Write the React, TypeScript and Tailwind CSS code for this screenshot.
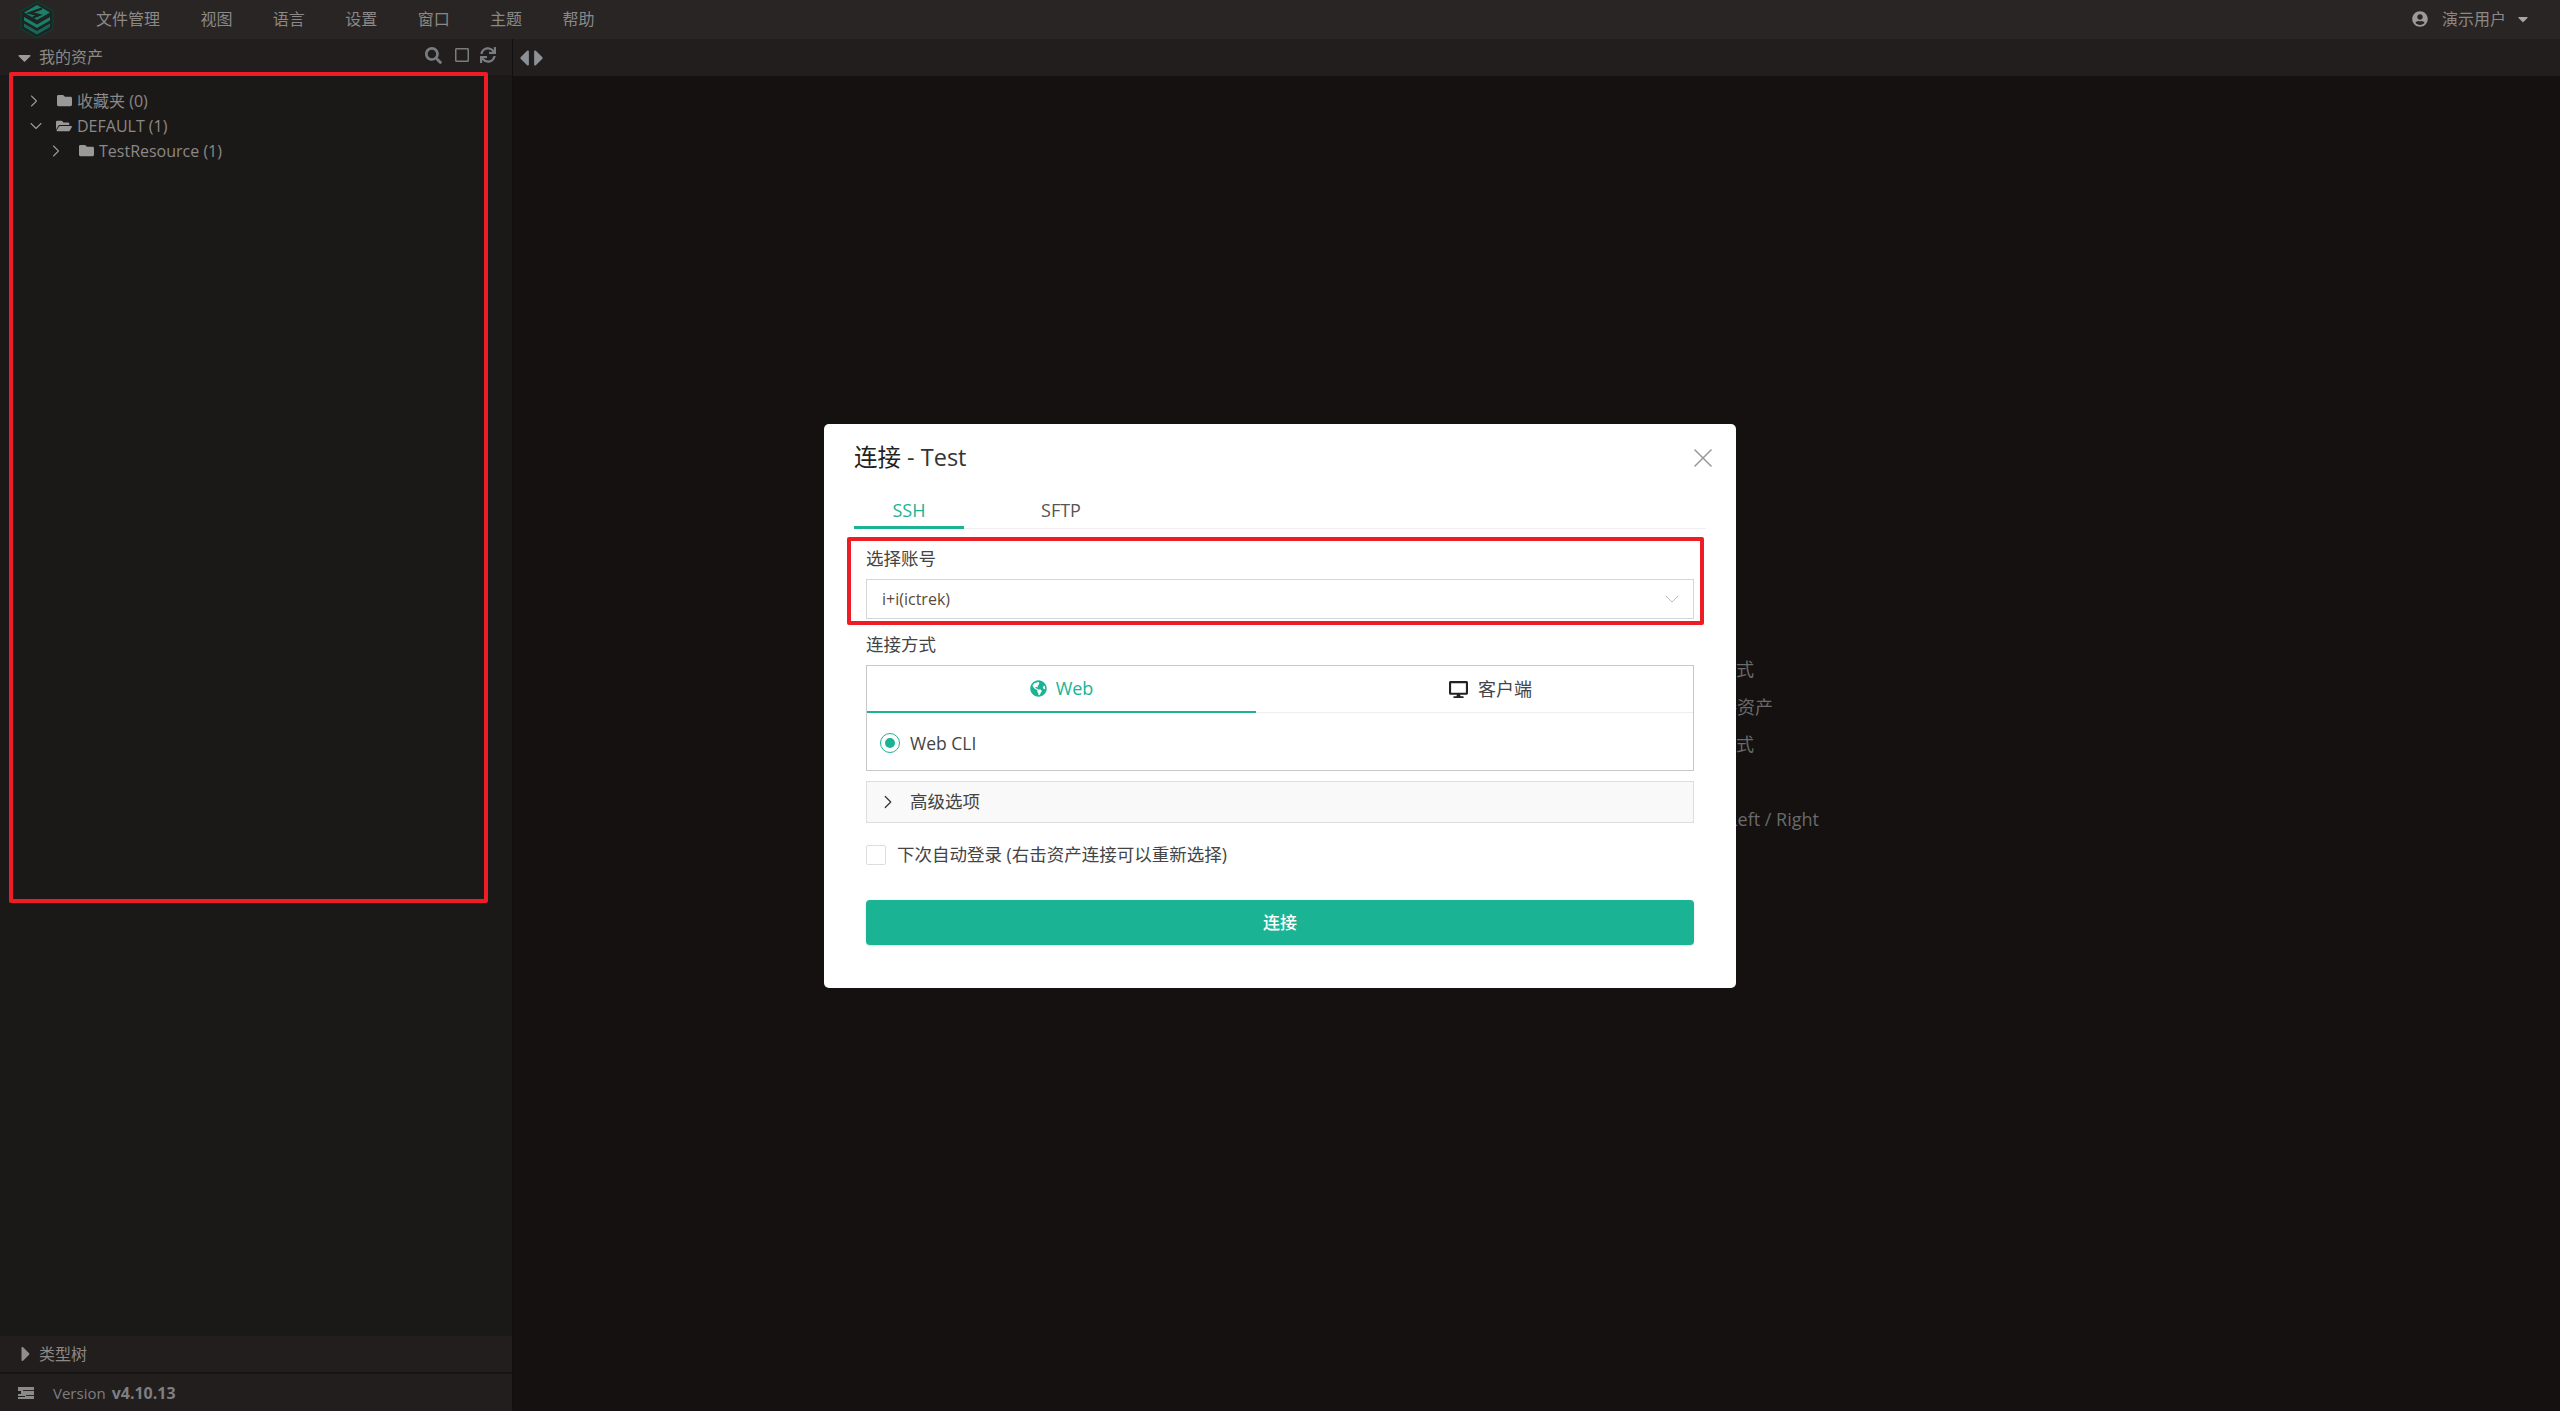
import { ChevronDown, ChevronRight, X } from "lucide-react";
import {
  FaCaretDown,
  FaCaretLeft,
  FaCaretRight,
  FaDesktop,
  FaFolder,
  FaFolderOpen,
  FaGlobeAmericas,
  FaRegSquare,
  FaSearch,
  FaSync,
  FaUserCircle,
} from "react-icons/fa";

const menus = ["文件管理", "视图", "语言", "设置", "窗口", "主题", "帮助"];

const tree = [
  { label: "收藏夹 (0)", open: false, indent: "pl-[27px]" },
  { label: "DEFAULT (1)", open: true, indent: "pl-[27px]" },
  { label: "TestResource (1)", open: false, indent: "pl-[49px]" },
];

function Logo() {
  return (
    <svg width="34" height="38" viewBox="0 0 34 38" className="shrink-0">
      <path d="M17 1 33 10V28L17 37 1 28V10Z" fill="#1d2422" stroke="#123a31" strokeWidth="1.5" />
      <path d="M17 4 30 11.5 17 19 4 11.5Z" fill="#1b8069" />
      <path d="M4 16 17 23.5 30 16V19.5L17 27 4 19.5Z" fill="#1b8069" />
      <path d="M4 22.5 17 30 30 22.5V26L17 33.5 4 26Z" fill="#16685a" />
      <path d="M22 7.5 10 12 19 14 13 16.5" fill="none" stroke="#1d2422" strokeWidth="2.4" />
    </svg>
  );
}

function TopBar() {
  return (
    <header className="flex h-[39px] shrink-0 items-center bg-[#292524] pl-[20px] pr-[29px] text-[16px] text-[#8b8886]">
      <Logo />
      <nav className="ml-[42px] flex gap-[40.4px] pb-[2px]">
        {menus.map((menu) => (
          <span key={menu}>{menu}</span>
        ))}
      </nav>
      <div className="ml-auto flex items-center pb-[1px]">
        <FaUserCircle className="text-[16px] text-[#9a9a9a]" />
        <span className="ml-[14px]">演示用户</span>
        <FaCaretDown className="ml-[9px] text-[16px] text-[#a5a5a5]" />
      </div>
    </header>
  );
}

function Sidebar() {
  return (
    <aside className="flex w-[513px] shrink-0 flex-col border-r border-r-[#111010] bg-[#1b1918] text-[#8b8886]">
      <div className="flex h-[36px] shrink-0 items-center bg-[#211e1d] pl-[14px] pr-[16px] text-[16px]">
        <FaCaretDown className="text-[21px] text-[#9a9a9a]" />
        <span className="ml-[4px]">我的资产</span>
        <div className="ml-auto flex -translate-y-[2px] items-center text-[#7a7d80]">
          <FaSearch className="text-[17px]" />
          <FaRegSquare className="ml-[12px] text-[16px]" />
          <FaSync className="ml-[10px] text-[16px]" />
        </div>
      </div>

      <div className="flex-1 pt-[13px] text-[16px]">
        {tree.map((row) => (
          <div key={row.label} className={`flex h-[25px] items-center ${row.indent}`}>
            <span className="mr-[15px] flex w-[14px] shrink-0 justify-center">
              {row.open ? (
                <ChevronDown size={20} strokeWidth={1.3} className="shrink-0 translate-x-[2px] text-[#999]" />
              ) : (
                <ChevronRight size={20} strokeWidth={1.3} className="shrink-0 text-[#999]" />
              )}
            </span>
            <span className="mr-[5px] flex w-[16px] justify-center text-[#999]">
              {row.open ? <FaFolderOpen className="text-[16px]" /> : <FaFolder className="text-[15px]" />}
            </span>
            <span>{row.label}</span>
          </div>
        ))}
      </div>

      <div className="flex h-[36px] shrink-0 items-center bg-[#211e1d] pl-[14px] text-[16px]">
        <FaCaretRight className="text-[24px] text-[#8f8f8f]" />
        <span className="ml-[1px]">类型树</span>
      </div>
      <div className="h-[2px] shrink-0 bg-[#171514]" />
      <div className="flex h-[37px] shrink-0 items-center bg-[#211e1d] pl-[18px] pt-[1px] text-[15px] text-[#7d7f82]">
        <svg width="16" height="12" viewBox="0 0 16 12" className="shrink-0">
          <path d="M0 0H16V12H0V10H7V9H0V7H3V4H0Z" fill="#8a8a8a" />
          <path d="M5 3H16V4H5ZM8 8H16V9H8Z" fill="#2a2725" />
        </svg>
        <span className="ml-[19px]">Version</span>
        <span className="ml-[6px] text-[16px] font-bold">v4.10.13</span>
      </div>
    </aside>
  );
}

function Main() {
  return (
    <main className="flex min-w-0 flex-1 flex-col bg-[#141110]">
      <div className="flex h-[37px] shrink-0 items-center bg-[#211e1d] text-[#8d9195]">
        <FaCaretLeft className="-ml-[2px] text-[26px]" />
        <FaCaretRight className="-ml-[11px] text-[26px]" />
      </div>
      {/* help text, mostly hidden behind the dialog */}
      <div className="flex flex-col items-end pr-[806px] pt-[575px] text-[18px] leading-[37.5px] text-[#6a6a6a]">
        <span>点击左侧资产打开连接方式</span>
        <span className="-mr-[19px]">右键左侧节点批量连接资产</span>
        <span>点击标签页切换连接方式</span>
        <span>&nbsp;</span>
        <span className="-mr-[65px]">切换会话 Ctrl + Left / Right</span>
      </div>
    </main>
  );
}

function ConnectDialog() {
  return (
    <div className="absolute left-[824px] top-[424px] h-[564px] w-[912px] rounded-[5px] bg-white pt-[16px] text-[17.5px] text-[#444]">
      <X size={32} strokeWidth={1.2} className="absolute right-[17px] top-[18px] text-[#999]" />
      <div className="h-[34px] pl-[30px] text-[23.5px] leading-[34px] text-[#333]">
        <span className="text-[#222]">连接</span> - Test
      </div>

      <div className="mx-[30px] mt-[19px] flex h-[36px] gap-[42px] border-b border-b-[#eeeeee] text-[18px]">
        <div className="h-[36px] w-[110px] border-b-[3px] border-b-[#1ab394] text-center leading-[34px] text-[#1ab394]">SSH</div>
        <div className="h-[36px] w-[110px] text-center leading-[34px] text-[#555]">SFTP</div>
      </div>

      <div className="px-[42px]">
        <div className="mt-[17px] h-[24px] leading-[24px]">选择账号</div>
        <div className="mt-[9px] flex h-[40px] w-[828px] items-center border border-[#d3d7d7] pl-[15px] pr-[9px] text-[16px] text-[#5a4a3a]">
          i+i(ictrek)
          <ChevronDown size={24} strokeWidth={1} className="ml-auto text-[#bbb]" />
        </div>

        <div className="mt-[14px] h-[24px] leading-[22px]">连接方式</div>
        <div className="mt-[8px] h-[106px] w-[828px] border-[1.5px] border-[#c8c8c8]">
          <div className="flex h-[47px] border-b border-b-[#eeeeee] text-[18px]">
            <div className="flex h-[47px] w-[389px] items-center justify-center gap-[9px] border-b-2 border-b-[#1ab394] text-[#1ab394]">
              <FaGlobeAmericas className="text-[17px]" />
              Web
            </div>
            <div className="flex h-[46px] flex-1 items-center justify-center gap-[10px] pl-[32px] text-[#444]">
              <FaDesktop className="text-[19px] text-[#222]" />
              客户端
            </div>
          </div>
          <div className="flex h-[58px] items-center pl-[13px] pt-[2px]">
            <span className="flex h-[20px] w-[20px] items-center justify-center rounded-full border-[1.5px] border-[#1ab394]">
              <span className="h-[10px] w-[10px] rounded-full bg-[#1ab394]" />
            </span>
            <span className="ml-[10px]">Web CLI</span>
          </div>
        </div>

        <div className="mt-[10px] flex h-[42px] w-[828px] items-center border border-[#dddddd] bg-[#f9f9f9] pl-[10px]">
          <ChevronRight size={22} strokeWidth={1.3} className="text-[#333]" />
          <span className="ml-[11px] -translate-y-[1px]">高级选项</span>
        </div>

        <div className="mt-[22px] flex h-[20px] items-center">
          <span className="h-[20px] w-[20px] rounded-[2px] border border-[#dddddd] bg-white" />
          <span className="ml-[11px] -translate-y-[1px]">下次自动登录 (右击资产连接可以重新选择)</span>
        </div>

        <button className="mt-[35px] block h-[45px] w-[828px] rounded-[4px] bg-[#1ab394] text-[17px] font-medium text-white shadow-sm">
          连接
        </button>
      </div>
    </div>
  );
}

export default function App() {
  return (
    <div className="relative flex h-screen w-screen flex-col overflow-hidden bg-[#141110] font-['Open_Sans','Noto_Sans_CJK_SC',sans-serif]">
      <TopBar />
      <div className="flex min-h-0 flex-1">
        <Sidebar />
        <Main />
      </div>
      <ConnectDialog />
      {/* annotation frames on top of the screenshot */}
      <div className="pointer-events-none absolute left-[9px] top-[72px] h-[831px] w-[479px] rounded-[2px] border-4 border-[#ee1c25]" />
      <div className="pointer-events-none absolute left-[847px] top-[537px] h-[88px] w-[857px] rounded-[2px] border-4 border-[#ee1c25]" />
    </div>
  );
}
